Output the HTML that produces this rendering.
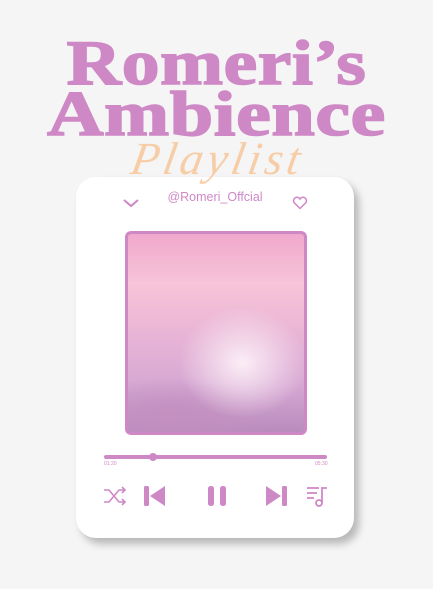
<!DOCTYPE html>
<html><head><meta charset="utf-8"><style>
body{margin:0;width:433px;height:589px;background:#f5f5f5;position:relative;overflow:hidden;font-family:"Liberation Sans",sans-serif}
.t{position:absolute;left:0;width:433px;text-align:center;color:#cf88c6;font-family:"Liberation Serif",serif;font-weight:bold;white-space:nowrap;-webkit-text-stroke:1.6px #cf88c6}
.card{position:absolute;left:76px;top:177px;width:278px;height:361px;background:#fff;border-radius:20px;box-shadow:5px 6px 8px rgba(0,0,0,.25)}
.img{position:absolute;left:125px;top:231px;width:176px;height:198px;border:3px solid #cf88c6;border-radius:6px;
background:radial-gradient(ellipse 45% 35% at 65% 65%,#fbeef6 0%,rgba(246,215,235,0) 80%),radial-gradient(ellipse 70% 25% at 25% 92%,#c390c0 0%,rgba(200,150,200,0) 80%),linear-gradient(180deg,#f0a8cc 0%,#f7c4d8 25%,#e9b5d6 50%,#d8a9d4 75%,#b98bbd 100%)}
</style></head><body>
<div class="t" style="top:26px;font-size:64px;letter-spacing:0.5px;transform:scaleX(1.18)">Romeri’s</div>
<div class="t" style="top:77px;font-size:64px;letter-spacing:0.5px;transform:scaleX(1.22)">Ambience</div>
<div class="card"></div>
<div style="position:absolute;left:128px;top:132px;width:180px;text-align:center;color:#f8c08e;font-family:'Liberation Serif',serif;font-style:italic;font-size:46px;letter-spacing:4px;opacity:.75;transform:skewX(-10deg)">Playlist</div>
<svg style="position:absolute;left:122px;top:197px" width="18" height="12"><path d="M2 3l7 6 7-6" fill="none" stroke="#cf88c6" stroke-width="2"/></svg>
<div style="position:absolute;left:150px;top:190px;width:130px;text-align:center;color:#cf88c6;font-size:12.5px">@Romeri_Offcial</div>
<svg style="position:absolute;left:292px;top:196px" width="16" height="14"><path d="M8 12.5L2 6.5A3 3 0 0 1 8 3A3 3 0 0 1 14 6.5Z" fill="none" stroke="#cf88c6" stroke-width="1.5"/></svg>
<div class="img"></div>
<div style="position:absolute;left:104px;top:455px;width:223px;height:4px;border-radius:2px;background:#cf88c6"></div>
<div style="position:absolute;left:149px;top:453px;width:8px;height:8px;border-radius:50%;background:#cf88c6"></div>
<div style="position:absolute;left:104px;top:461px;font-size:5px;color:#cf88c6">01:20</div>
<div style="position:absolute;left:315px;top:461px;font-size:5px;color:#cf88c6">05:30</div>
<svg style="position:absolute;left:100px;top:483px" width="230" height="26" fill="#cf88c6" stroke="#cf88c6">
<g fill="none" stroke-width="1.6"><path d="M4 7h5l10 12h6M4 19h5l10-12h6M22 4l3 3-3 3M22 16l3 3-3 3"/></g>
<rect x="44" y="3" width="5" height="20" rx="1.5" stroke="none"/><path d="M65 3v20L50 13z" stroke="none"/>
<rect x="108" y="3" width="6" height="20" rx="2.5" stroke="none"/><rect x="120" y="3" width="6" height="20" rx="2.5" stroke="none"/>
<path d="M166 3v20L181 13z" stroke="none"/><rect x="182" y="3" width="5" height="20" rx="1.5" stroke="none"/>
<g fill="none" stroke-width="1.8"><path d="M207 5h12M207 10h10M207 15h7M222 20V5h5"/><circle cx="219" cy="20" r="3"/></g>
</svg>
</body></html>
